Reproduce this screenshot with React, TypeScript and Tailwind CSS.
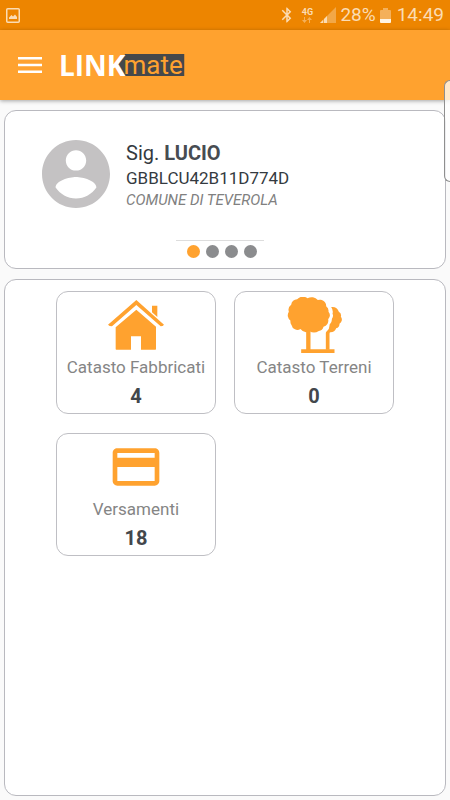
import React from 'react';
import { MdBluetooth, MdPayment } from 'react-icons/md';

interface Tile {
  label: string;
  count: number;
  icon: React.ReactNode;
}

const HouseIcon: React.FC = () => (
  <svg viewBox="174 47 168 150" className="w-[56px] h-[50px]" fill="currentColor" aria-hidden="true">
    <path d="M259 47 174 121Q178 126 186 126L259 62 332 126Q339 126 342 121Z" />
    <path d="M306 64H322V98L306 84Z" />
    <path d="M259 76 318 127V194Q318 196 316 196H273V156H243V196H199Q197 196 197 194V129Z" />
  </svg>
);

const TreesIcon: React.FC = () => (
  <svg viewBox="170 38 164 168" className="w-[55px] h-[56px]" fill="currentColor" aria-hidden="true">
    <path d="M200 45A22 22 0 0 1 231 42A24 24 0 0 1 262 47A19 19 0 0 1 287 66A17 17 0 0 1 294 82A18 18 0 0 1 293 105A18 18 0 0 1 279 127A18 18 0 0 1 265 140A28 28 0 0 1 237 141A22 22 0 0 1 210 134A18 18 0 0 1 183 122A16 16 0 0 1 180 109A20 20 0 0 1 175 82A19 19 0 0 1 182 61A18 18 0 0 1 200 45Z" />
    <path d="M302 68Q320 66 325 82A13 13 0 0 1 331 97A14 14 0 0 1 327 118A14 14 0 0 1 317 132A18 18 0 0 1 300 144Q297 144 297 148V196H286V146Q286 143 289 141Q298 133 297 121Q305 114 304 104Q310 96 306 88Q309 78 302 68Z" />
    <path d="M227 138H240V195H312V206H212V195H227Z" />
  </svg>
);

const tiles: Tile[] = [
  { label: 'Catasto Fabbricati', count: 4, icon: <HouseIcon /> },
  { label: 'Catasto Terreni', count: 0, icon: <TreesIcon /> },
  { label: 'Versamenti', count: 18, icon: <MdPayment className="size-14" aria-hidden="true" /> },
];

const StatusBar: React.FC = () => (
  <div className="flex h-[30px] items-center bg-[#ed8500] px-1.5 text-[#fbdcb4]">
    <svg viewBox="0 0 14 15" className="w-[14px] h-[15px]" aria-hidden="true">
      <rect x="0.75" y="0.75" width="12.5" height="13.5" rx="1" fill="none" stroke="currentColor" strokeWidth="1.5" />
      <path d="M3 11V9.5L5.5 7 7 8.5 9 6.5 11 9V11Z" fill="currentColor" />
    </svg>
    <div className="ml-auto flex items-center">
      <MdBluetooth className="size-[18px]" aria-hidden="true" />
      <div className="ml-1 flex w-[14px] flex-col items-center">
        <span className="text-[9px] leading-[9px] font-bold">4G</span>
        <svg viewBox="0 0 10 6" className="w-[10px] h-[6px] opacity-50" fill="currentColor" aria-hidden="true">
          <path d="M2 0H3V3H5L2.500 6 0 3H2ZM7 6H8V3H10L7.500 0 5 3H7Z" />
        </svg>
      </div>
      <svg viewBox="0 0 16 16" className="ml-1.5 w-4 h-4" fill="currentColor" aria-hidden="true">
        <path d="M16 0V16H0Z" opacity="0.4" />
        <path d="M0 16 3 13V16ZM4 12 7 9V16H4Z" />
      </svg>
      <span className="ml-1 text-[19px] leading-6">28%</span>
      <svg viewBox="0 0 11 15" className="ml-1 w-[11px] h-[15px]" fill="currentColor" aria-hidden="true">
        <path d="M3 0H8V2H10Q11 2 11 3V11H0V3Q0 2 1 2H3Z" opacity="0.5" />
        <path d="M0 11H11V14Q11 15 10 15H1Q0 15 0 14Z" fill="#fff4e3" />
      </svg>
      <span className="ml-1.5 text-[19px] leading-6">14:49</span>
    </div>
  </div>
);

const AppBar: React.FC = () => (
  <header className="flex h-[70px] items-center bg-[#ffa22f] pl-[18px] shadow-[0_1px_4px_rgba(0,0,0,0.35)]">
    <button type="button" aria-label="Menu" className="text-white">
      <svg viewBox="0 0 24 16" className="w-6 h-4" fill="currentColor" aria-hidden="true">
        <path d="M0 0H24V2.500H0ZM0 6.750H24V9.250H0ZM0 13.500H24V16H0Z" />
      </svg>
    </button>
    <h1 className="ml-[17px] flex items-center">
      <span className="relative z-10 font-['Open_Sans',sans-serif] text-[28px] leading-[22px] font-bold text-white">
        LINK
      </span>
      <span className="relative -ml-2 h-[22px] pr-0.5 pl-1.5 text-[26px] leading-[22px] text-[#ffa22f]">
        <svg
          viewBox="0 0 66 22"
          preserveAspectRatio="none"
          className="absolute inset-0 size-full"
          fill="#45484b"
          aria-hidden="true"
        >
          <path d="M0 11 8 0H66V22H8Z" />
        </svg>
        <span className="relative">mate</span>
      </span>
    </h1>
  </header>
);

const ProfileCard: React.FC = () => (
  <section className="rounded-xl border border-[#b9b9bf] bg-white pt-[29px] pb-[10px]">
    <div className="flex items-start pl-[37px]">
      <svg viewBox="2 2 20 20" className="size-[68px] shrink-0" fill="#c4c2c3" aria-hidden="true">
        <path d="M12 2C6.480 2 2 6.480 2 12s4.480 10 10 10 10-4.480 10-10S17.520 2 12 2zm0 3c1.660 0 3 1.340 3 3s-1.340 3-3 3-3-1.340-3-3 1.340-3 3-3zm0 14.200c-2.500 0-4.710-1.280-6-3.220.03-1.990 4-3.080 6-3.080 1.990 0 5.970 1.090 6 3.080-1.290 1.940-3.500 3.220-6 3.220z" />
      </svg>
      <div className="ml-4 text-[#343a40]">
        <p className="text-xl leading-[26px]">
          Sig. <strong className="font-bold text-[#474c52]">LUCIO</strong>
        </p>
        <p className="text-[17px] leading-6">GBBLCU42B11D774D</p>
        <p className="text-[15px] leading-5 text-[#808080] italic">COMUNE DI TEVEROLA</p>
      </div>
    </div>
    <div className="mt-[30px] flex justify-center pr-2.5">
      <div className="flex w-[88px] justify-center gap-1.5 border-t border-[#dddddd] pt-1 pl-1">
        <span className="size-[13px] rounded-full bg-[#ffa22f]" />
        <span className="size-[13px] rounded-full bg-[#8b8c8e]" />
        <span className="size-[13px] rounded-full bg-[#8b8c8e]" />
        <span className="size-[13px] rounded-full bg-[#8b8c8e]" />
      </div>
    </div>
  </section>
);

const TileCard: React.FC<{ tile: Tile }> = ({ tile }) => (
  <button
    type="button"
    className="flex h-[123px] w-[160px] flex-col items-center rounded-xl border border-[#bfbfc4] bg-white pt-1"
  >
    <span className="flex h-[58px] items-center justify-center text-[#ffa22f]">{tile.icon}</span>
    <span className="text-[17px] leading-[26px] whitespace-nowrap text-[#858585]">{tile.label}</span>
    <span className="mt-0.5 text-xl leading-7 font-bold text-[#43474c]">{tile.count}</span>
  </button>
);

export default function App() {
  return (
    <div className="relative flex min-h-screen flex-col overflow-hidden bg-[#fafafa] font-['Roboto',sans-serif]">
      <StatusBar />
      <AppBar />
      <main className="flex flex-1 flex-col gap-2.5 px-1 pt-2.5 pb-1">
        <ProfileCard />
        <section className="flex-1 rounded-xl border border-[#b9b9bf] bg-white pt-[11px]">
          <div className="grid grid-cols-[160px_160px] justify-center gap-x-[18px] gap-y-[19px]">
            {tiles.map((tile) => (
              <TileCard key={tile.label} tile={tile} />
            ))}
          </div>
        </section>
      </main>
      {/* edge panel handle */}
      <div className="absolute top-20 right-0 h-[102px] w-[6px] rounded-l-lg border border-r-0 border-[#8f8f8f] bg-white/75" />
    </div>
  );
}
